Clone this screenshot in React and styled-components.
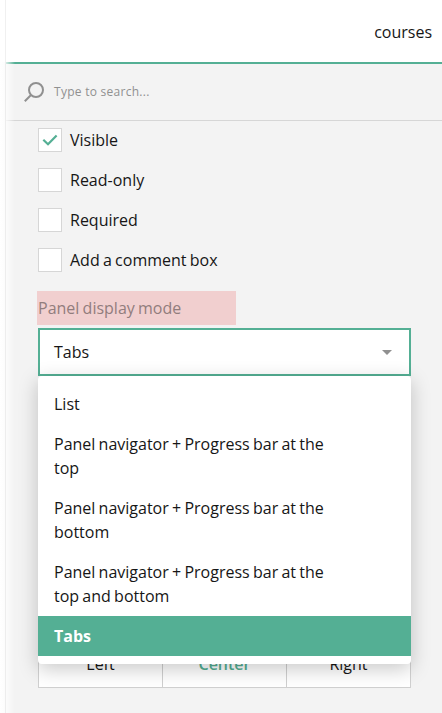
import React from "react";
import styled, { createGlobalStyle } from "styled-components";

const Global = createGlobalStyle`
  * { box-sizing: border-box; }
  html, body { margin: 0; overflow: hidden; }
  body {
    background: #fff;
    color: #161616;
    font: 16px/24px "Open Sans", sans-serif;
    word-spacing: -0.9px;
  }
`;

const Page = styled.div`
  display: flex;
  height: 713px;
  padding-left: 5px;
  position: relative;
`;

const Panel = styled.div`
  flex: 1;
  display: flex;
  flex-direction: column;
  border-left: 1px solid #f0f0f0;
  background: #f3f3f3;
`;

const EdgeFade = styled.div`
  position: absolute;
  left: 0;
  top: 62px;
  bottom: 0;
  width: 15px;
  background: linear-gradient(90deg, #fff 0, #fcfcfc 5px, #ededed 5px, #ededed 6px, rgba(255, 255, 255, 0.75) 6px, rgba(255, 255, 255, 0) 15px);
`;

const Header = styled.header`
  height: 64px;
  padding: 0 10px 0 0;
  display: flex;
  align-items: center;
  justify-content: flex-end;
  background: #fff;
  border-bottom: 2px solid #54af94;
`;

const HeaderText = styled.span`
  padding-top: 2px;
`;

const Search = styled.div`
  height: 57px;
  padding: 0 18px;
  display: flex;
  align-items: center;
  gap: 10px;
  border-bottom: 1px solid #d6d6d6;
  font-size: 12px;
  letter-spacing: 0.27px;
  word-spacing: 0;
  color: #909090;
`;

const Form = styled.main`
  padding: 7px 31px 0 32px;
`;

const CheckList = styled.div`
  display: flex;
  flex-direction: column;
  gap: 16px;
`;

const CheckRow = styled.div`
  display: flex;
  gap: 8px;
  height: 24px;
`;

const Box = styled.span`
  display: flex;
  align-items: center;
  justify-content: center;
  width: 24px;
  height: 24px;
  background: #fff;
  border: 1px solid #d6d6d6;
`;

const FieldLabel = styled.div`
  width: 199px;
  height: 34px;
  margin: 19px 0 3px -1px;
  padding: 5px 1px;
  background: #f1cfcf;
  color: #917d7d;
`;

const SelectWrap = styled.div`
  position: relative;
`;

const SelectBox = styled.div`
  display: flex;
  align-items: center;
  justify-content: space-between;
  height: 48px;
  padding: 0 17px 0 14px;
  background: #fff;
  border: 2px solid #54af94;
`;

const Menu = styled.ul`
  position: absolute;
  z-index: 1;
  top: 48px;
  left: 0;
  right: 0;
  margin: 0;
  padding: 8px 0;
  list-style: none;
  background: #fff;
  border-radius: 4px;
  box-shadow: 0 5px 20px rgba(0, 0, 0, 0.22);
`;

const Option = styled.li`
  padding: 8px 72px 8px 16px;
  background: ${(p) => (p.$selected ? "#54af94" : "transparent")};
  color: ${(p) => (p.$selected ? "#fff" : "inherit")};
  font-weight: ${(p) => (p.$selected ? 700 : 400)};
`;

const ButtonGroup = styled.div`
  display: flex;
  height: 48px;
  margin-top: 264px;
  background: #fff;
  border: 1px solid #d0d0d0;
`;

const GroupButton = styled.div`
  flex: 1;
  display: flex;
  align-items: center;
  justify-content: center;
  color: ${(p) => (p.$active ? "#54af94" : "inherit")};
  font-weight: ${(p) => (p.$active ? 600 : 400)};
  & + & { border-left: 1px solid #d0d0d0; }
`;

const checks = [
  ["Visible", true],
  ["Read-only", false],
  ["Required", false],
  ["Add a comment box", false],
];

const modes = [
  "List",
  "Panel navigator + Progress bar at the top",
  "Panel navigator + Progress bar at the bottom",
  "Panel navigator + Progress bar at the top and bottom",
  "Tabs",
];

export default function App() {
  return (
    <Page>
      <Global />
      <Panel>
        <Header><HeaderText>courses</HeaderText></Header>
        <Search>
          <svg width="20" height="20" viewBox="0 0 20 20" fill="none" stroke="#909090" strokeWidth="2">
            <circle cx="12" cy="8" r="7" />
            <path d="M7 13L.8 19.2" />
          </svg>
          <span>Type to search...</span>
        </Search>
        <Form>
          <CheckList>
            {checks.map(([label, on]) => (
              <CheckRow key={label}>
                <Box>
                  {on && (
                    <svg width="16" height="12" viewBox="0 0 16 12" fill="none" stroke="#54af94" strokeWidth="2.2">
                      <path d="M1.3 5.7L6 10.2L14.6 1.4" />
                    </svg>
                  )}
                </Box>
                <span>{label}</span>
              </CheckRow>
            ))}
          </CheckList>
          <FieldLabel>Panel display mode</FieldLabel>
          <SelectWrap>
            <SelectBox>
              <span>Tabs</span>
              <svg width="10" height="5" viewBox="0 0 10 5"><path d="M0 0H10L5 5Z" fill="#909090" /></svg>
            </SelectBox>
            <Menu>
              {modes.map((m) => <Option key={m} $selected={m === "Tabs"}>{m}</Option>)}
            </Menu>
          </SelectWrap>
          <ButtonGroup>
            <GroupButton>Left</GroupButton>
            <GroupButton $active>Center</GroupButton>
            <GroupButton>Right</GroupButton>
          </ButtonGroup>
        </Form>
      </Panel>
      <EdgeFade />
    </Page>
  );
}
